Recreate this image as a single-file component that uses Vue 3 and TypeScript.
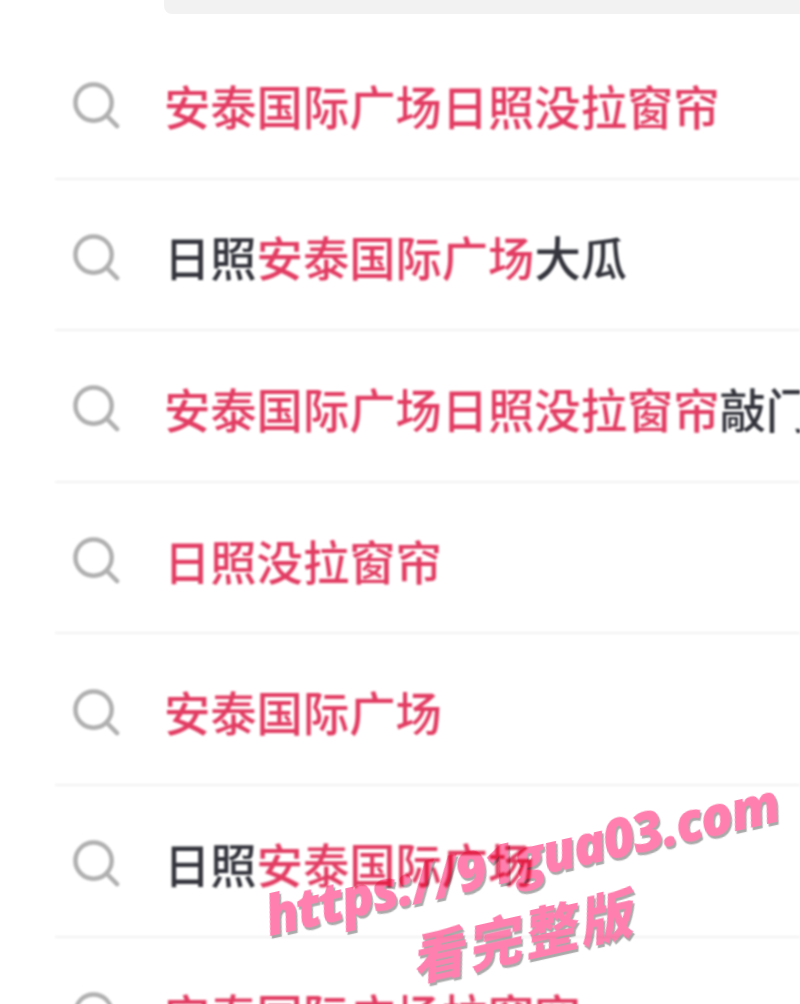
<script setup lang="ts">
interface Part {
  text: string
  hit: boolean
}

const rows: Part[][] = [
  [{ text: '安泰国际广场日照没拉窗帘', hit: true }],
  [
    { text: '日照', hit: false },
    { text: '安泰国际广场', hit: true },
    { text: '大瓜', hit: false },
  ],
  [
    { text: '安泰国际广场日照没拉窗帘', hit: true },
    { text: '敲门', hit: false },
  ],
  [{ text: '日照没拉窗帘', hit: true }],
  [{ text: '安泰国际广场', hit: true }],
  [
    { text: '日照', hit: false },
    { text: '安泰国际广场', hit: true },
  ],
  [{ text: '安泰国际广场拉窗帘', hit: true }],
]
</script>

<template>
  <div class="page">
    <div class="search-bar"></div>
    <ul class="list">
      <li v-for="(row, i) in rows" :key="i" class="row">
        <svg class="icon" viewBox="0 0 48 48" fill="none" stroke="#b0b0b0" stroke-width="4.6" stroke-linecap="round">
          <circle cx="21" cy="21" r="18.5" />
          <path d="M34.5 34.5 L45 45" />
        </svg>
        <span class="label">
          <span v-for="(part, j) in row" :key="j" :class="{ hit: part.hit }">{{ part.text }}</span>
        </span>
      </li>
    </ul>
    <div class="watermark">
      <div class="url">https://91gua03.com</div>
      <div class="cta">看完整版</div>
    </div>
  </div>
</template>

<style scoped>
.page {
  position: relative;
  width: 800px;
  height: 1004px;
  overflow: hidden;
  background: #fff;
  font-family: "Noto Sans CJK SC", "Noto Sans", sans-serif;
}

.search-bar {
  height: 14px;
  margin-left: 164px;
  border-radius: 0 0 0 8px;
  background: #f2f2f2;
  filter: blur(0.6px);
}

.list {
  list-style: none;
  margin: 14px 0 0 55px;
  padding: 0;
  filter: blur(0.8px);
}

.row {
  display: flex;
  align-items: center;
  box-sizing: border-box;
  height: 151.6px;
  padding: 0 0 0 18px;
  border-bottom: 2px solid #f1f1f1;
  white-space: nowrap;
  overflow: hidden;
}

.icon {
  flex: none;
  width: 47px;
  height: 47px;
  margin-top: 6px;
  margin-right: 44px;
}

.label {
  font-size: 46.3px;
  font-weight: 500;
  line-height: 60px;
  color: #33343c;
  margin-top: 4px;
}

.hit {
  color: #e23d63;
}

.watermark {
  position: absolute;
  left: 289px;
  top: 880px;
  width: 530px;
  transform: rotate(-12.7deg);
  transform-origin: left bottom;
  font-weight: 700;
  font-style: italic;
  color: #ff80ae;
  text-shadow: 1px 3px 1px #a9a9a9;
  mix-blend-mode: multiply;
  filter: blur(0.6px);
}

.url {
  font-family: "Open Sans", "Noto Sans", sans-serif;
  font-size: 54px;
  font-weight: 800;
  line-height: 66px;
  letter-spacing: -1.8px;
  white-space: nowrap;
}

.cta {
  margin-top: 6px;
  padding-left: 132px;
  font-size: 54px;
  font-weight: 900;
  line-height: 70px;
  letter-spacing: 3px;
}
</style>

<style>
html,
body {
  margin: 0;
  overflow: hidden;
  background: #fff;
}
</style>
